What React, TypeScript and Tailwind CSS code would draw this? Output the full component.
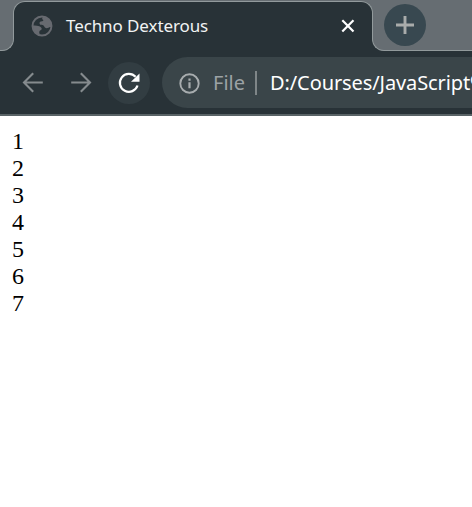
import React from 'react';

const ui = "font-['Noto_Sans','Open_Sans',sans-serif]";

function Globe() {
  return (
    <svg className="shrink-0" width="22" height="22" viewBox="0 0 22 22">
      <circle cx="11" cy="11" r="9.5" fill="none" stroke="#676a70" strokeWidth="1.900" />
      <path
        d="M12 2C11 3 10.8 4.300 12 4.800C12.800 5.200 12.300 6.200 11.200 6.300C8.800 6.400 8.200 7.600 8.700 9C9.300 10.300 11.500 9.600 12.600 10.600C13.800 11.800 13.400 13.200 15.500 13.200C17.600 13.200 17.800 11.500 20 12C21 6 16.500 1.500 12 2Z"
        fill="#676a70"
      />
      <path
        d="M2 10.500C4 10.300 6.500 10.500 8.300 11.300C9.800 12 10.700 12.700 10.700 14C10.700 15.500 8.500 15.200 8.300 16.700C8.200 17.600 8.200 18.400 9.300 19.800C5 19.500 1.500 15 2 10.500Z"
        fill="#676a70"
      />
    </svg>
  );
}

function Arrow({ flip = false }: { flip?: boolean }) {
  return (
    <svg
      className={flip ? 'shrink-0 -scale-x-100' : 'shrink-0'}
      width="22"
      height="22"
      viewBox="0 0 22 22"
      fill="none"
      stroke="#858b8e"
      strokeWidth="2.1"
    >
      <path d="M20.800 10.500H2.500M11.200 1.300L2 10.500l9.200 9.200" />
    </svg>
  );
}

function TabStrip() {
  return (
    <div className="flex h-[51px] w-full">
      <div className="flex w-[14px] shrink-0 flex-col">
        <div className="h-[25px] bg-[#666d72]" />
        <div className="h-[26px] rounded-br-[12px] border-r-[1.5px] border-b-[1.5px] border-[#929a9c] bg-[#666d72]" />
      </div>
      <div className="-ml-px h-[25px] w-[360px] shrink-0 bg-[#666d72] pt-px">
        <div className="h-[24px] rounded-t-[12px] border-x border-t border-[#929a9c] bg-[#283237]" />
      </div>
      <div className="relative -ml-[360px] flex h-[50px] w-[360px] shrink-0 items-center pt-px pl-[18px]">
        <Globe />
        <span className={`${ui} ml-[13px] w-[260px] text-[17px] leading-[24px] tracking-[-0.100px] whitespace-nowrap text-[#f1f3f3]`}>
          Techno Dexterous
        </span>
        <svg className="ml-[14px] shrink-0" width="16" height="16" viewBox="0 0 16 16">
          <path d="M2.300 2.300l11.200 11.200M13.500 2.300l-11.200 11.200" stroke="#fff" strokeWidth="2.200" />
        </svg>
      </div>
      <div className="relative -ml-px min-w-0 flex-1">
        <div className="ml-px h-[25px] bg-[#666d72]" />
        <div className="h-[26px] rounded-bl-[12px] border-b-[1.5px] border-l-[1.5px] border-[#929a9c] bg-[#666d72]" />
        <div className="absolute top-[4px] left-[12px] flex size-[42px] items-center justify-center rounded-full bg-[#384850]">
          <svg width="20" height="20" viewBox="0 0 20 20">
            <path d="M10 1v18M1 10h18" stroke="#a9acab" strokeWidth="2.900" />
          </svg>
        </div>
      </div>
    </div>
  );
}

function Toolbar() {
  return (
    <div className="flex h-[63px] items-center">
      <div className="ml-[22px] flex w-[140px] shrink-0 items-center">
        <Arrow />
        <span className="w-[26px]" />
        <Arrow flip />
        <span className="ml-[16px] flex size-[42px] items-center justify-center rounded-full bg-[#323d42]">
          <svg width="24" height="24" viewBox="0 0 24 24">
            <path d="M18.600 5.800A9 9 0 1 0 20.500 14.500" fill="none" stroke="#fff" strokeWidth="2.200" />
            <path d="M22.500 2.500v8.200h-8.500z" fill="#fff" />
          </svg>
        </span>
      </div>
      <div className="flex h-[51px] min-w-0 flex-1 items-center overflow-hidden rounded-l-full bg-[#3a4549] pl-[16px]">
        <svg className="shrink-0" width="22" height="22" viewBox="0 0 22 22">
          <circle cx="11.500" cy="11.500" r="9.200" fill="none" stroke="#a7acae" strokeWidth="1.900" />
          <path d="M11.500 10.300v6M11.500 6.500v2.200" stroke="#a7acae" strokeWidth="2.200" />
        </svg>
        <span className={`${ui} ml-[13px] w-[32px] shrink-0 text-[20px] leading-[28px] text-[#9ca2a5]`}>File</span>
        <span className="ml-[10px] h-[24px] w-[2px] shrink-0 bg-[#7f8688]" />
        <span className={`${ui} ml-[13px] text-[20px] leading-[28px] tracking-[-0.100px] whitespace-nowrap text-white`}>
          D:/Courses/JavaScript%
        </span>
      </div>
    </div>
  );
}

export default function App() {
  return (
    <div className="h-[507px] w-[472px] overflow-hidden bg-white">
      <header className="h-[116px] border-b-2 border-[#596366] bg-[#283237]">
        <TabStrip />
        <Toolbar />
      </header>
      <main className="pt-[12px] pl-[12px] font-['Liberation_Serif',serif] text-[24px] leading-[27px] text-black">
        {[1, 2, 3, 4, 5, 6, 7].map((n) => (
          <div key={n}>{n}</div>
        ))}
      </main>
    </div>
  );
}
